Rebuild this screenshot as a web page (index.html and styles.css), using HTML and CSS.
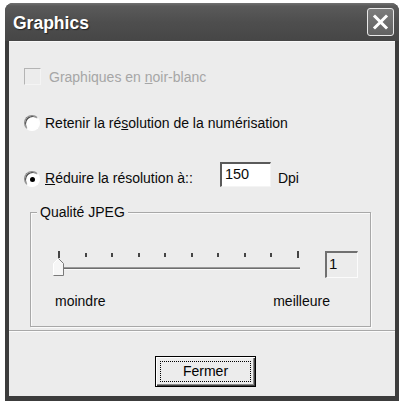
FILE: index.html
```html
<!DOCTYPE html>
<html lang="fr">
<head>
<meta charset="utf-8">
<title>Graphics</title>
<link rel="stylesheet" href="styles.css">
</head>
<body>
<div class="window">
  <div class="titlebar">
    <span class="title">Graphics</span>
    <span class="close">
      <svg width="25" height="26" viewBox="0 0 25 26"><path d="M7 7.5 L18 18.5 M18 7.5 L7 18.5" stroke="#fff" stroke-width="3" stroke-linecap="square" fill="none"/></svg>
    </span>
  </div>
  <div class="client">
    <div class="row check-row">
      <span class="checkbox"></span>
      <span class="label disabled">Graphiques en <u>n</u>oir-blanc</span>
    </div>
    <div class="row radio-row r1">
      <span class="radio"></span>
      <span class="label">Retenir la ré<u>s</u>olution de la numérisation</span>
    </div>
    <div class="row radio-row r2">
      <span class="radio checked"><span class="dot"></span></span>
      <span class="label"><u>R</u>éduire la résolution à::</span>
      <span class="textbox">150</span>
      <span class="unit">Dpi</span>
    </div>
    <fieldset class="group">
      <legend>Qualité JPEG</legend>
      <div class="slider-row">
        <div class="slider">
          <div class="ticks">
            <i class="tick major"></i><i class="tick"></i><i class="tick"></i><i class="tick"></i><i class="tick"></i><i class="tick"></i><i class="tick"></i><i class="tick"></i><i class="tick"></i><i class="tick major"></i>
          </div>
          <div class="track"></div>
          <svg class="thumb" width="11" height="18" viewBox="0 0 11 18">
            <polygon points="0.5,5.5 5.5,0.5 10.5,5.5 10.5,17.5 0.5,17.5" fill="#f6f6f6"/>
            <polyline points="0.5,17 0.5,5.5 5.5,0.5" fill="none" stroke="#fff" stroke-width="1"/>
            <polyline points="5.5,0.5 10.5,5.5 10.5,17.5 0.5,17.5" fill="none" stroke="#7a7a7a" stroke-width="1"/>
          </svg>
        </div>
        <span class="valuebox">1</span>
      </div>
      <div class="scale-labels"><span>moindre</span><span>meilleure</span></div>
    </fieldset>
    <div class="separator"></div>
    <div class="footer">
      <button class="btn" type="button"><span class="focus">Fermer</span></button>
    </div>
  </div>
</div>
</body>
</html>
```
FILE: styles.css
```css
html, body {
  margin: 0;
  background: #ffffff;
}
body {
  font-family: "Liberation Sans", Arial, sans-serif;
  font-size: 14px;
  color: #0a0a0a;
}
.window {
  margin: 3px 0 0 5px;
  width: 394px;
  height: 398px;
  box-sizing: border-box;
  padding: 0 4px 5px 4px;
  background: #3c3c3c;
  border-radius: 8px 8px 0 0;
  display: flex;
  flex-direction: column;
}
.titlebar {
  height: 38px;
  margin: 0 -4px;
  padding: 0 5px 0 8px;
  display: flex;
  align-items: center;
  justify-content: space-between;
  background: linear-gradient(#727272 0px, #5a5a5a 3px, #4e4e4e 50%, #464646 100%);
  border-radius: 8px 8px 0 0;
}
.title {
  color: #ffffff;
  font-weight: bold;
  font-size: 17.5px;
  text-shadow: 1px 1px 1px #222;
  margin-top: 3px;
}
.close {
  width: 27px;
  height: 28px;
  box-sizing: border-box;
  border: 1px solid #e8e8e8;
  border-radius: 3px;
  background: linear-gradient(#7c7c7c, #626262);
  display: flex;
  align-items: center;
  justify-content: center;
}
.client {
  flex: 1;
  background: #ececec;
  display: flex;
  flex-direction: column;
  padding-left: 15px;
  border-top: 1px solid #f8f8f8;
}
.row {
  display: flex;
}
.label {
  line-height: 16px;
  white-space: nowrap;
}
.disabled {
  color: #a6a6a6;
}
.check-row {
  margin-top: 26px;
  align-items: center;
}
.checkbox {
  width: 17px;
  height: 17px;
  box-sizing: border-box;
  border: 1px solid;
  border-color: #b4b4b4 #f4f4f4 #f4f4f4 #b4b4b4;
  background: #ececec;
  margin-right: 8px;
}
.radio-row {
  align-items: center;
}
.r1 {
  margin-top: 30px;
}
.radio {
  width: 16px;
  height: 16px;
  box-sizing: border-box;
  border-radius: 50%;
  border: 1px solid;
  border-color: #8a8a8a #ffffff #ffffff #8a8a8a;
  background: #ffffff;
  box-shadow: inset 1px 1px 0 #4a4a4a;
  margin-right: 5px;
  display: flex;
  align-items: center;
  justify-content: center;
}
.dot {
  width: 5px;
  height: 5px;
  border-radius: 50%;
  background: #000;
  margin: 1px 0 0 1px;
}
.r2 {
  margin-top: 31px;
  align-items: flex-start;
}
.r2 .radio {
  margin-top: 9px;
}
.r2 .label {
  margin-top: 8px;
}
.textbox {
  width: 51px;
  height: 25px;
  box-sizing: border-box;
  margin-left: 27px;
  border-top: 2px solid #5a5a5a;
  border-left: 2px solid #5a5a5a;
  border-right: 1px solid #f4f4f4;
  border-bottom: 1px solid #f4f4f4;
  background: #ffffff;
  padding: 2px 0 0 3px;
  font-size: 14.5px;
  line-height: 17px;
}
.unit {
  margin-left: 7px;
  margin-top: 8px;
  line-height: 16px;
}
.group {
  margin: 17px 0 0 6px;
  width: 341px;
  box-sizing: border-box;
  padding: 0;
  border: 1px solid #a8a8a8;
  box-shadow: inset 1px 1px 0 #fafafa, 1px 1px 0 #fafafa;
  min-inline-size: 0;
}
.group legend {
  margin-left: 6px;
  padding: 0 3px;
  line-height: 17px;
  background: #ececec;
}
.slider-row {
  display: flex;
  align-items: flex-start;
  margin: 29px 0 0 22px;
}
.slider {
  position: relative;
  width: 250px;
  height: 28px;
}
.ticks {
  display: flex;
  justify-content: space-between;
  align-items: center;
  margin: 1px 0 0 5px;
  width: 241px;
  height: 7px;
}
.tick {
  display: block;
  width: 2px;
  height: 4px;
  background: #444;
}
.tick.major {
  height: 7px;
}
.track {
  margin: 9px 0 0 9px;
  width: 238px;
  height: 1px;
  background: #6e6e6e;
  border-top: 1px solid #9a9a9a;
  border-bottom: 1px solid #fbfbfb;
}
.thumb {
  position: absolute;
  left: 0;
  top: 8px;
}
.valuebox {
  margin: 1px 0 0 22px;
  width: 33px;
  height: 27px;
  box-sizing: border-box;
  border-top: 2px solid #707070;
  border-left: 2px solid #707070;
  border-right: 1px solid #fbfbfb;
  border-bottom: 1px solid #fbfbfb;
  padding: 2px 0 0 2px;
  font-size: 15px;
  line-height: 18px;
}
.scale-labels {
  display: flex;
  justify-content: space-between;
  margin: 15px 0 0 24px;
  width: 275px;
  line-height: 17px;
  padding-bottom: 16px;
}
.separator {
  margin: 3px 0 0 -15px;
  height: 1px;
  background: #a8a8a8;
  border-bottom: 1px solid #fbfbfb;
}
.footer {
  margin-top: 24px;
  padding-left: 131px;
}
.btn {
  width: 101px;
  height: 31px;
  box-sizing: border-box;
  border: 1px solid #000;
  background: #ececec;
  box-shadow: inset 1px 1px 0 #ffffff, inset -1px -1px 0 #404040, inset -2px -2px 0 #8a8a8a;
  padding: 4px;
  margin: 0;
  font-family: "Liberation Sans", Arial, sans-serif;
  font-size: 14px;
  color: #000;
  display: flex;
}
.focus {
  flex: 1;
  border: 1px dotted #000;
  line-height: 19px;
  text-align: center;
}
```
